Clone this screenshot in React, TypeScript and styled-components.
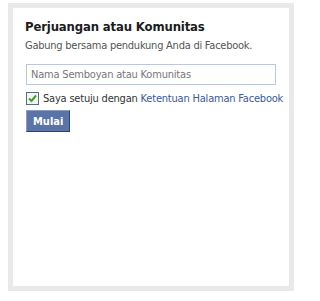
import styled, { createGlobalStyle } from "styled-components";

const GlobalStyle = createGlobalStyle`
  html, body {
    margin: 0;
    padding: 0;
    background: #ffffff;
  }
  body {
    padding: 3px 10px 0 8px;
    font-family: "DejaVu Sans Condensed", "DejaVu Sans", sans-serif;
  }
`;

export default function App() {
  return (
    <>
      <GlobalStyle />
      <Frame>
        <Title>Perjuangan atau Komunitas</Title>
        <Subtitle>Gabung bersama pendukung Anda di Facebook.</Subtitle>
        <NameInput type="text" placeholder="Nama Semboyan atau Komunitas" />
        <AgreeRow>
          <CheckBox>
            <svg width="11" height="11" viewBox="0 0 11 11">
              <path d="M2 5.5 L4.5 8 L9 2.5" fill="none" stroke="#3fa028" strokeWidth="2" />
            </svg>
          </CheckBox>
          <span>
            Saya setuju dengan <TermsLink href="#">Ketentuan Halaman Facebook</TermsLink>
          </span>
        </AgreeRow>
        <StartButton>Mulai</StartButton>
      </Frame>
    </>
  );
}

const Frame = styled.div`
  box-sizing: border-box;
  width: 286px;
  height: 288px;
  border: 5px solid #e9e9e9;
  background: #fff;
  padding: 11px 12px 0 12px;
  display: flex;
  flex-direction: column;
  align-items: flex-start;
`;

const Title = styled.div`
  font-size: 13px;
  font-weight: bold;
  color: #1c1c1c;
  line-height: 16px;
  letter-spacing: -0.15px;
`;

const Subtitle = styled.div`
  margin-top: 4px;
  font-size: 11px;
  color: #555;
  line-height: 14px;
  letter-spacing: -0.24px;
`;

const NameInput = styled.input`
  box-sizing: border-box;
  margin: 11px 0 0 1px;
  width: 250px;
  height: 21px;
  border: 1px solid #bdc7d8;
  padding: 0 4px;
  font-family: inherit;
  font-size: 11px;
  letter-spacing: -0.2px;
  color: #333;
  outline: none;

  &::placeholder {
    color: #777;
  }
`;

const AgreeRow = styled.label`
  margin: 7px 0 0 1px;
  display: flex;
  align-items: center;
  gap: 4px;
  font-size: 11px;
  letter-spacing: -0.2px;
  color: #333;
  white-space: nowrap;
`;

const CheckBox = styled.span`
  box-sizing: border-box;
  width: 13px;
  height: 13px;
  border: 1px solid #5c6b7a;
  background: #f4f4f4;
  display: flex;
  align-items: center;
  justify-content: center;
`;

const TermsLink = styled.a`
  color: #3b5998;
  text-decoration: none;
`;

const StartButton = styled.button`
  margin: 5px 0 0 1px;
  box-sizing: border-box;
  height: 22px;
  padding: 0 6px;
  background: #5b74a8;
  border: 1px solid;
  border-color: #8a9cc2 #29447e #29447e #8a9cc2;
  color: #fff;
  font-family: inherit;
  font-size: 11px;
  font-weight: bold;
`;
